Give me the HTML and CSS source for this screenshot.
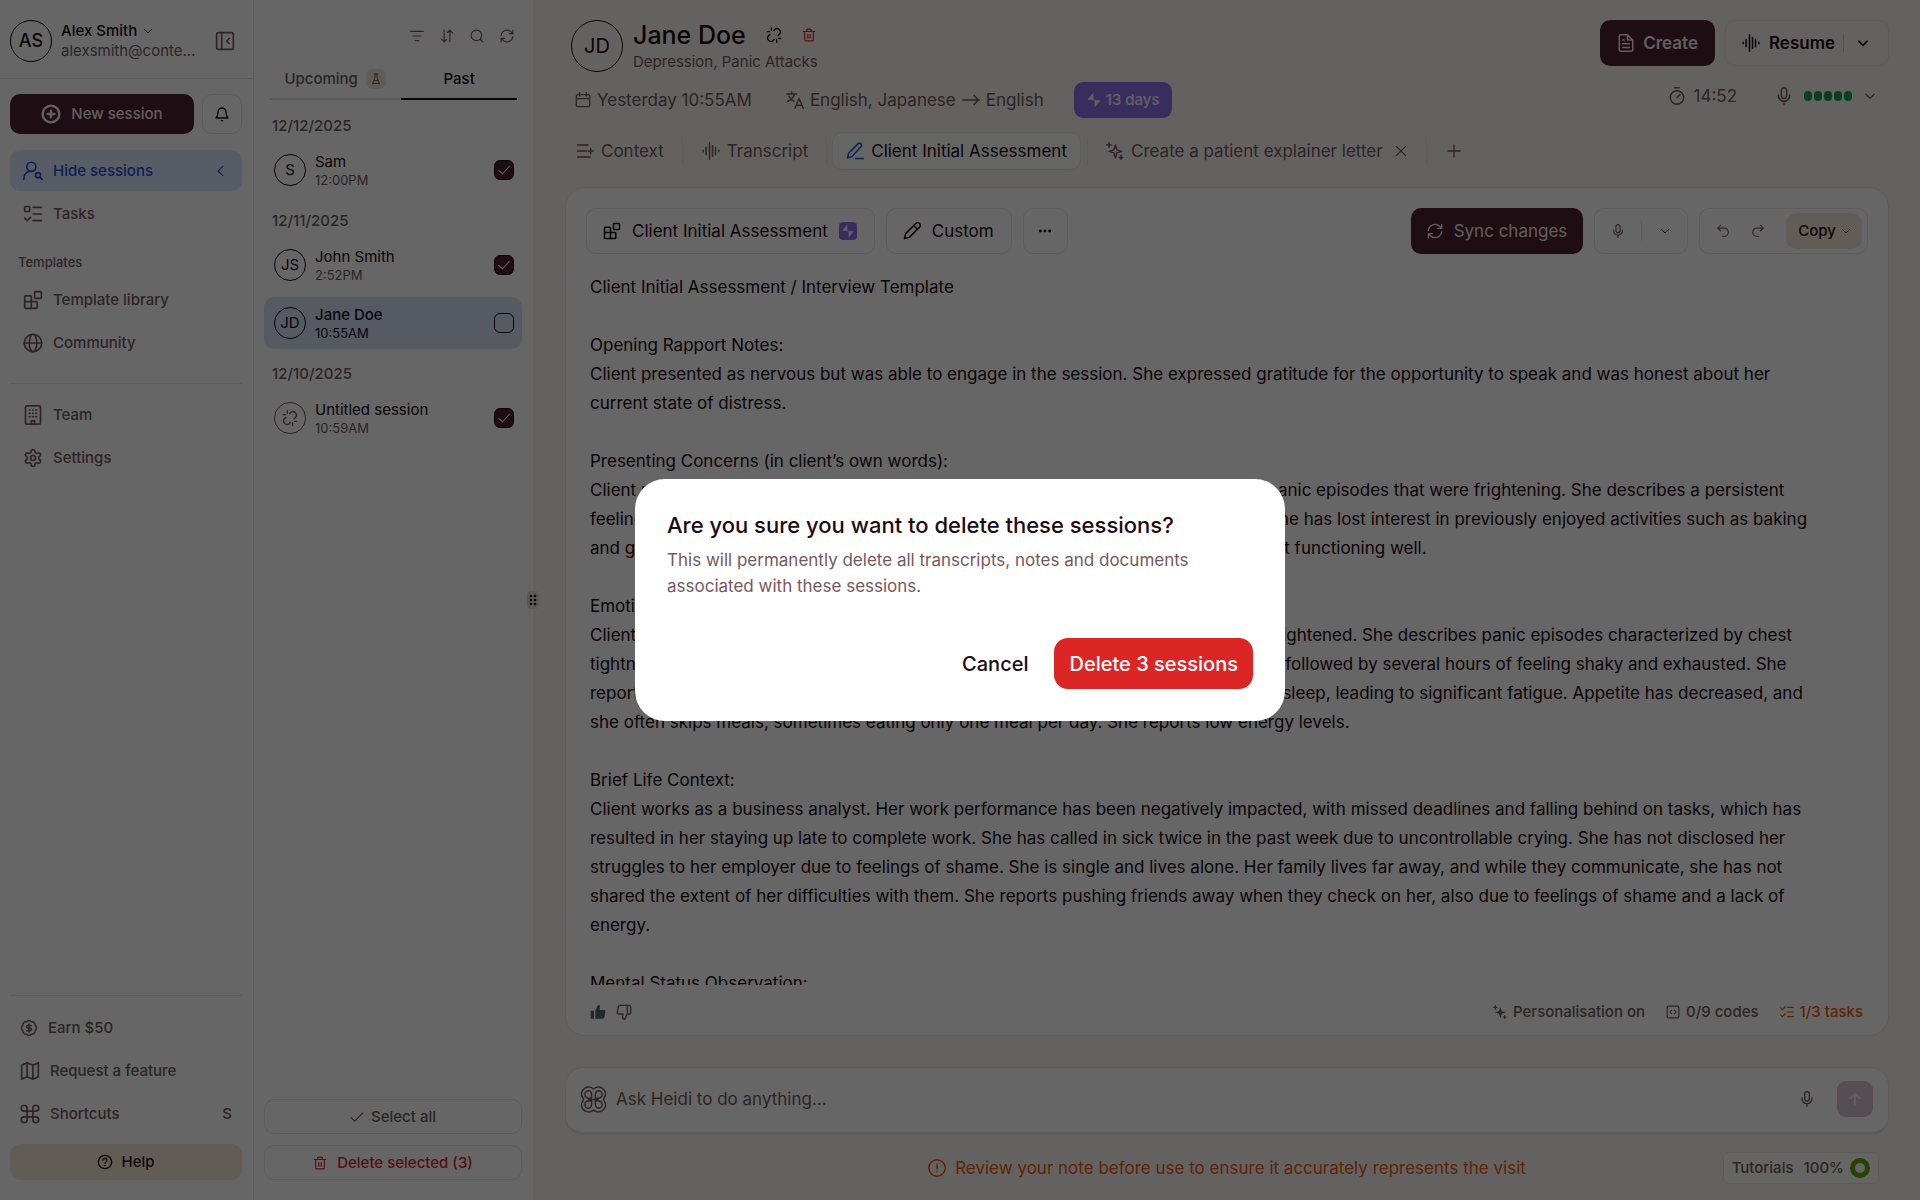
FILE: index.html
```html
<!DOCTYPE html>
<html lang="en">
<head>
  <meta charset="UTF-8">
  <title>Jane Doe – Client Initial Assessment</title>
  <meta name="viewport" content="width=device-width, initial-scale=1">
  <link rel="stylesheet" href="styles.css">
</head>
<body>
  <!-- icon sprite -->
  <svg class="sprite" aria-hidden="true">
    <symbol id="i-chevron" viewBox="0 0 24 24"><path d="M5 9l7 7 7-7"/></symbol>
    <symbol id="i-chevron-left" viewBox="0 0 24 24"><path d="M15 4l-8 8 8 8"/></symbol>
    <symbol id="i-panel" viewBox="0 0 24 24"><rect x="2" y="2" width="20" height="20" rx="2"/><path d="M8 2v20M17 9l-3 3 3 3"/></symbol>
    <symbol id="i-plus-circle" viewBox="0 0 24 24"><circle cx="12" cy="12" r="10"/><path d="M12 8v8M8 12h8"/></symbol>
    <symbol id="i-bell" viewBox="0 0 24 24"><path d="M6 9a6 6 0 0 1 12 0c0 5 1 7 3 9H3c2-2 3-4 3-9M11 22h2"/></symbol>
    <symbol id="i-user-search" viewBox="0 0 24 24"><circle cx="10" cy="7" r="5.5"/><path d="M1 22c0-5 2-8 6-9.5"/><circle cx="18" cy="17" r="3"/><path d="M20.5 19.5L23 22"/></symbol>
    <symbol id="i-tasks" viewBox="0 0 24 24"><rect x="2" y="3" width="6" height="6" rx="1"/><path d="M2 17l3 3 4-4M12 4h10M12 12h10M12 20h10"/></symbol>
    <symbol id="i-blocks" viewBox="0 0 24 24"><rect x="14" y="2" width="8" height="8" rx="1"/><path d="M10 22V8a1 1 0 0 0-1-1H3a1 1 0 0 0-1 1v13a1 1 0 0 0 1 1h13a1 1 0 0 0 1-1v-6a1 1 0 0 0-1-1H2"/></symbol>
    <symbol id="i-globe" viewBox="0 0 24 24"><circle cx="12" cy="12" r="10.5"/><ellipse cx="12" cy="12" rx="4.5" ry="10.5"/><path d="M1.5 12h21"/></symbol>
    <symbol id="i-building" viewBox="0 0 24 24"><rect x="3" y="1" width="18" height="22" rx="2"/><path d="M10 23v-4h4v4M7.5 6h1M11.5 6h1M15.5 6h1M7.5 10h1M11.5 10h1M15.5 10h1M7.5 14h1M11.5 14h1M15.5 14h1"/></symbol>
    <symbol id="i-gear" viewBox="0 0 24 24"><path d="M12.22 2h-.44a2 2 0 0 0-2 2v.18a2 2 0 0 1-1 1.73l-.43.25a2 2 0 0 1-2 0l-.15-.08a2 2 0 0 0-2.73.73l-.22.38a2 2 0 0 0 .73 2.73l.15.1a2 2 0 0 1 1 1.72v.51a2 2 0 0 1-1 1.74l-.15.09a2 2 0 0 0-.73 2.73l.22.38a2 2 0 0 0 2.73.73l.15-.08a2 2 0 0 1 2 0l.43.25a2 2 0 0 1 1 1.73V20a2 2 0 0 0 2 2h.44a2 2 0 0 0 2-2v-.18a2 2 0 0 1 1-1.73l.43-.25a2 2 0 0 1 2 0l.15.08a2 2 0 0 0 2.73-.73l.22-.39a2 2 0 0 0-.73-2.73l-.15-.08a2 2 0 0 1-1-1.74v-.5a2 2 0 0 1 1-1.74l.15-.09a2 2 0 0 0 .73-2.73l-.22-.38a2 2 0 0 0-2.73-.73l-.15.08a2 2 0 0 1-2 0l-.43-.25a2 2 0 0 1-1-1.73V4a2 2 0 0 0-2-2z"/><circle cx="12" cy="12" r="3"/></symbol>
    <symbol id="i-badge-dollar" viewBox="0 0 24 24"><path d="M3.85 8.62a4 4 0 0 1 4.78-4.77 4 4 0 0 1 6.74 0 4 4 0 0 1 4.78 4.78 4 4 0 0 1 0 6.74 4 4 0 0 1-4.77 4.78 4 4 0 0 1-6.75 0 4 4 0 0 1-4.78-4.77 4 4 0 0 1 0-6.76Z"/><path d="M15 8.5h-4.5a1.7 1.7 0 0 0 0 3.5h3a1.7 1.7 0 0 1 0 3.5H9M12 17.5v-11"/></symbol>
    <symbol id="i-map" viewBox="0 0 24 24"><path d="M8.5 2L2 5v17l6.5-3 7 3 6.5-3V2l-6.5 3zM8.5 2v17M15.5 5v17"/></symbol>
    <symbol id="i-command" viewBox="0 0 24 24"><path d="M15.5 5v14a3.5 3.5 0 1 0 3.5-3.5H5A3.5 3.5 0 1 0 8.500 19V5A3.5 3.5 0 1 0 5 8.500h14A3.5 3.5 0 1 0 15.500 5"/></symbol>
    <symbol id="i-help" viewBox="0 0 24 24"><circle cx="12" cy="12" r="10"/><path d="M9 9.500a3 3 0 1 1 4.500 2.500c-1 .6-1.500 1-1.500 2M12 17v.5"/></symbol>
    <symbol id="i-filter" viewBox="0 0 24 24"><path d="M1 4h22M5 12h14M9 20h6"/></symbol>
    <symbol id="i-sort" viewBox="0 0 24 24"><path d="M2 17l5 5 4-4M7 22V2M13 6l4-4 5 5M17 2v20"/></symbol>
    <symbol id="i-search" viewBox="0 0 24 24"><circle cx="11" cy="11" r="9"/><path d="M18 18l4 4"/></symbol>
    <symbol id="i-refresh" viewBox="0 0 24 24"><path d="M2 11a10 10 0 0 1 17-6l3 3M22 2v6h-6M22 13a10 10 0 0 1-17 6l-3-3M2 22v-6h6"/></symbol>
    <symbol id="i-flask" viewBox="0 0 24 24"><path d="M8 2h8M10 2v7L5 21h14L14 9V2M8 15h8"/></symbol>
    <symbol id="i-unlink" viewBox="0 0 24 24"><path d="M18 13l2.500-2.500a5 5 0 0 0-7-7L11.800 5.200M6 11l-2.500 2.500a5 5 0 0 0 7 7l1.700-1.700M8 1v4M2 7h3M16 19v4M19 17h3"/></symbol>
    <symbol id="i-check" viewBox="0 0 24 24"><path d="M2 13l6 6L22 5"/></symbol>
    <symbol id="i-trash" viewBox="0 0 24 24"><path d="M2 6h20M19.500 6v14a2 2 0 0 1-2 2h-11a2 2 0 0 1-2-2V6M8 6V4a2 2 0 0 1 2-2h4a2 2 0 0 1 2 2v2M10 11v6M14 11v6"/></symbol>
    <symbol id="i-calendar" viewBox="0 0 24 24"><rect x="2" y="4" width="20" height="18" rx="2"/><path d="M2 10h20M7 1v5M17 1v5"/></symbol>
    <symbol id="i-translate" viewBox="0 0 24 24"><path d="M1 4h13M7.500 1v3M11.500 4c-1.500 5-5 8-9.500 10M4 7c1.500 3 3.500 5 6.500 6.500M12 23l5.500-13L23 23M14 19h7"/></symbol>
    <symbol id="i-arrow-right" viewBox="0 0 24 24"><path d="M1 12h22M16 6l6 6-6 6"/></symbol>
    <symbol id="i-bolt" viewBox="0 0 24 24"><path class="solid" d="M11 1v10.500H2zM13 12.500h9L13 23zM9 11.500h6v1H9z"/></symbol>
    <symbol id="i-context" viewBox="0 0 24 24"><path d="M2 4h14M2 12h12M2 20h17M19.500 8.500v7M16.500 12h6.500"/></symbol>
    <symbol id="i-wave" viewBox="0 0 24 24"><path d="M1.500 11v2M5.500 7v10M10 1v22M14 5v14M18 7v10M22.500 11v2"/></symbol>
    <symbol id="i-pen-line" viewBox="0 0 24 24"><path d="M2 21l1.500-6L16 2.500a2.500 2.500 0 0 1 4 3.500L8 19.500zM13 22h10"/></symbol>
    <symbol id="i-pen" viewBox="0 0 24 24"><path d="M2 22l1.500-6.500L17 2a3.300 3.300 0 0 1 5 5L8.500 20.500zM14.500 5l4.500 4.500"/></symbol>
    <symbol id="i-sparkles" viewBox="0 0 24 24"><path d="M12.500 4l2 6.500 6.500 2-6.500 2-2 6.500-2-6.500-6.500-2 6.500-2zM4 1v6M1 4h6M20 18v5M17.500 20.500h5"/></symbol>
    <symbol id="i-sparkles-solid" viewBox="0 0 24 24"><path class="solid" d="M12.500 3l2.500 7.500 7.500 2-7.500 2.500-2.500 7.500-2.500-7.500L2.500 12.500 10 10.500z"/><path d="M4 1v6M1 4h6M20 18v5M17.500 20.500h5"/></symbol>
    <symbol id="i-close" viewBox="0 0 24 24"><path d="M4 4l16 16M20 4L4 20"/></symbol>
    <symbol id="i-plus" viewBox="0 0 24 24"><path d="M12 3v18M3 12h18"/></symbol>
    <symbol id="i-file" viewBox="0 0 24 24"><path d="M14 1H5a2 2 0 0 0-2 2v18a2 2 0 0 0 2 2h14a2 2 0 0 0 2-2V8zM14 1v7h7M7.500 8h2M7.500 13h9M7.500 18h9"/></symbol>
    <symbol id="i-timer" viewBox="0 0 24 24"><circle cx="12" cy="14" r="9"/><path d="M9 1h6M12 14l4-4"/></symbol>
    <symbol id="i-mic" viewBox="0 0 24 24"><rect x="8.500" y="1" width="7" height="14" rx="3.500"/><path d="M4.500 10.500v1a7.500 7.500 0 0 0 15 0v-1M12 19v4"/></symbol>
    <symbol id="i-dots" viewBox="0 0 24 24"><circle class="solid" cx="4" cy="12" r="2.500"/><circle class="solid" cx="12" cy="12" r="2.500"/><circle class="solid" cx="20" cy="12" r="2.500"/></symbol>
    <symbol id="i-undo" viewBox="0 0 24 24"><path d="M8 2L3 7l5 5M3 7h11a7 7 0 0 1 0 14h-3"/></symbol>
    <symbol id="i-redo" viewBox="0 0 24 24"><path d="M16 2l5 5-5 5M21 7H10a7 7 0 0 0 0 14h3"/></symbol>
    <symbol id="i-thumb-up" viewBox="0 0 24 24"><path class="solid" d="M1 10h5v12H1zM8 10l4-9c2 0 3.500 1.500 3 4l-.7 4H21c1.500 0 2.300 1 2 2.500L21.500 20c-.3 1.300-1.200 2-2.500 2H8z"/></symbol>
    <symbol id="i-thumb-down" viewBox="0 0 24 24"><path d="M17 2v13l-4 8c-2 0-3.500-1.500-3-4l.7-4H4c-1.500 0-2.300-1-2-2.500L3.500 4c.3-1.300 1.200-2 2.500-2h14a2 2 0 0 1 2 2v9a2 2 0 0 1-2 2h-3"/></symbol>
    <symbol id="i-code" viewBox="0 0 24 24"><rect x="2" y="2" width="20" height="20" rx="2"/><path d="M9.500 9l-2.500 3 2.500 3M14.500 9l2.500 3-2.500 3"/></symbol>
    <symbol id="i-checklist" viewBox="0 0 24 24"><path d="M1 5l3 3 5-5M1 17l3 3 5-5M13 4h10M13 12h10M13 20h10"/></symbol>
    <symbol id="i-logo" viewBox="0 0 28 28"><path d="M14 3C12 .8 8 .5 5 2.200 1 4.800.6 9.500 3 12.500c.6.8.6 2.200 0 3-2.400 3-2 7.700 2 10.300 3 1.700 7 1.400 9-.8 2 2.200 6 2.500 9 .8 4-2.600 4.400-7.300 2-10.300-.6-.8-.6-2.200 0-3 2.400-3 2-7.700-2-10.300-3-1.700-7-1.400-9 .8z"/><path d="M12 12.700C7.500 13.200 5 11.500 5 8.800 5 6.500 7 5 8.800 5c2.700 0 3.700 2.500 3.200 7.700zM16 12.700c4.500.5 7-1.200 7-3.900C23 6.500 21 5 19.200 5c-2.700 0-3.700 2.500-3.200 7.700zM12 15.300c-4.500-.5-7 1.200-7 3.900C5 21.500 7 23 8.800 23c2.700 0 3.700-2.500 3.200-7.700zM16 15.300c4.500-.5 7 1.200 7 3.900 0 2.300-2 3.800-3.800 3.800-2.700 0-3.700-2.500-3.200-7.700zM9 14h10"/></symbol>
    <symbol id="i-arrow-up" viewBox="0 0 24 24"><path d="M12 21V3M4 11l8-8 8 8"/></symbol>
    <symbol id="i-alert" viewBox="0 0 24 24"><circle cx="12" cy="12" r="11"/><path d="M12 7v6M12 16.500v.5"/></symbol>
    <symbol id="i-grip" viewBox="0 0 12 18"><circle class="solid" cx="4" cy="5" r="1.300"/><circle class="solid" cx="8" cy="5" r="1.300"/><circle class="solid" cx="4" cy="9" r="1.300"/><circle class="solid" cx="8" cy="9" r="1.300"/><circle class="solid" cx="4" cy="13" r="1.300"/><circle class="solid" cx="8" cy="13" r="1.300"/></symbol>
  </svg>

  <div class="app">
    <aside class="sidebar">
      <div class="account">
        <span class="avatar avatar-md">AS</span>
        <div class="account-text">
          <button class="account-name">Alex Smith <svg class="icon s12"><use href="#i-chevron"/></svg></button>
          <div class="account-mail">alexsmith@contentlab.com</div>
        </div>
        <button class="plain" aria-label="Collapse sidebar"><svg class="icon s20"><use href="#i-panel"/></svg></button>
      </div>

      <div class="new-row">
        <button class="btn-dark new-session"><svg class="icon s20 bold"><use href="#i-plus-circle"/></svg>New session</button>
        <button class="btn-outline bell" aria-label="Notifications"><svg class="icon s16"><use href="#i-bell"/></svg></button>
      </div>

      <nav class="nav">
        <a class="nav-item active" href="#"><svg class="icon s20"><use href="#i-user-search"/></svg>Hide sessions<svg class="icon s14 push"><use href="#i-chevron-left"/></svg></a>
        <a class="nav-item" href="#"><svg class="icon s20"><use href="#i-tasks"/></svg>Tasks</a>
        <h2 class="nav-title">Templates</h2>
        <a class="nav-item" href="#"><svg class="icon s20"><use href="#i-blocks"/></svg>Template library</a>
        <a class="nav-item" href="#"><svg class="icon s20"><use href="#i-globe"/></svg>Community</a>
        <hr>
        <a class="nav-item" href="#"><svg class="icon s20"><use href="#i-building"/></svg>Team</a>
        <a class="nav-item" href="#"><svg class="icon s20"><use href="#i-gear"/></svg>Settings</a>
      </nav>

      <div class="nav-bottom">
        <a class="nav-item" href="#"><svg class="icon s18"><use href="#i-badge-dollar"/></svg>Earn $50</a>
        <a class="nav-item" href="#"><svg class="icon s20"><use href="#i-map"/></svg>Request a feature</a>
        <a class="nav-item" href="#"><svg class="icon s20"><use href="#i-command"/></svg>Shortcuts<kbd class="push">S</kbd></a>
        <button class="btn-sand"><svg class="icon s16"><use href="#i-help"/></svg>Help</button>
      </div>
    </aside>

    <section class="sessions">
      <div class="sessions-tools">
        <button class="plain" aria-label="Filter"><svg class="icon s14"><use href="#i-filter"/></svg></button>
        <button class="plain" aria-label="Sort"><svg class="icon s14"><use href="#i-sort"/></svg></button>
        <button class="plain" aria-label="Search"><svg class="icon s14"><use href="#i-search"/></svg></button>
        <button class="plain" aria-label="Refresh"><svg class="icon s14"><use href="#i-refresh"/></svg></button>
      </div>
      <div class="sessions-tabs">
        <button class="tab-upcoming">Upcoming <span class="beta"><svg class="icon s12"><use href="#i-flask"/></svg></span></button>
        <button class="tab-past">Past</button>
      </div>

      <h3 class="date">12/12/2025</h3>
      <label class="session">
        <span class="avatar avatar-sm">S</span>
        <span class="session-text"><span class="session-name">Sam</span><span class="session-time">12:00PM</span></span>
        <input type="checkbox" checked>
      </label>
      <h3 class="date">12/11/2025</h3>
      <label class="session">
        <span class="avatar avatar-sm">JS</span>
        <span class="session-text"><span class="session-name">John Smith</span><span class="session-time">2:52PM</span></span>
        <input type="checkbox" checked>
      </label>
      <label class="session current">
        <span class="avatar avatar-sm">JD</span>
        <span class="session-text"><span class="session-name">Jane Doe</span><span class="session-time">10:55AM</span></span>
        <input type="checkbox">
      </label>
      <h3 class="date">12/10/2025</h3>
      <label class="session">
        <span class="avatar avatar-sm muted"><svg class="icon s16"><use href="#i-unlink"/></svg></span>
        <span class="session-text"><span class="session-name">Untitled session</span><span class="session-time">10:59AM</span></span>
        <input type="checkbox" checked>
      </label>

      <div class="sessions-actions">
        <button class="btn-outline"><svg class="icon s14"><use href="#i-check"/></svg>Select all</button>
        <button class="btn-outline danger"><svg class="icon s14"><use href="#i-trash"/></svg>Delete selected (3)</button>
      </div>
      <span class="grip"><svg class="icon"><use href="#i-grip"/></svg></span>
    </section>

    <main class="main">
      <header class="header">
        <div class="patient">
          <div class="patient-id">
            <span class="avatar avatar-lg">JD</span>
            <div>
              <div class="patient-name">
                <h1>Jane Doe</h1>
                <button class="plain dark" aria-label="Unlink patient"><svg class="icon s16"><use href="#i-unlink"/></svg></button>
                <button class="plain danger" aria-label="Delete session"><svg class="icon s14"><use href="#i-trash"/></svg></button>
              </div>
              <div class="patient-note">Depression, Panic Attacks</div>
            </div>
          </div>
          <div class="meta">
            <span class="meta-item when"><svg class="icon s16"><use href="#i-calendar"/></svg>Yesterday 10:55AM</span>
            <span class="meta-item lang"><svg class="icon s18"><use href="#i-translate"/></svg>English, Japanese <svg class="icon s18"><use href="#i-arrow-right"/></svg> English</span>
            <span class="trial"><svg class="icon s16"><use href="#i-bolt"/></svg>13 days</span>
          </div>
        </div>
        <div class="controls">
          <div class="controls-row">
            <button class="btn-dark create"><svg class="icon s18"><use href="#i-file"/></svg>Create</button>
            <div class="btn-outline split">
              <button class="plain resume"><svg class="icon s18"><use href="#i-wave"/></svg>Resume</button>
              <button class="plain resume-more" aria-label="More resume options"><svg class="icon s14 bold"><use href="#i-chevron"/></svg></button>
            </div>
          </div>
          <div class="recording">
            <span class="meta-item"><svg class="icon s18"><use href="#i-timer"/></svg>14:52</span>
            <button class="plain mic-level" aria-label="Microphone"><svg class="icon s18"><use href="#i-mic"/></svg>
              <span class="level"><i></i><i></i><i></i><i></i><i></i></span>
              <svg class="icon s14"><use href="#i-chevron"/></svg></button>
          </div>
        </div>
      </header>

      <nav class="tabs">
        <button class="tab"><svg class="icon s18"><use href="#i-context"/></svg>Context</button>
        <button class="tab"><svg class="icon s18"><use href="#i-wave"/></svg>Transcript</button>
        <button class="tab selected"><svg class="icon s18"><use href="#i-pen-line"/></svg>Client Initial Assessment</button>
        <button class="tab letter"><svg class="icon s18"><use href="#i-sparkles"/></svg>Create a patient explainer letter<svg class="icon s14"><use href="#i-close"/></svg></button>
        <button class="tab add" aria-label="Add document"><svg class="icon s16"><use href="#i-plus"/></svg></button>
      </nav>

      <article class="card">
        <div class="toolbar">
          <button class="btn-outline tool"><svg class="icon s18"><use href="#i-blocks"/></svg>Client Initial Assessment<span class="pro"><svg class="icon s14"><use href="#i-bolt"/></svg></span></button>
          <button class="btn-outline tool"><svg class="icon s18"><use href="#i-pen"/></svg>Custom</button>
          <button class="btn-outline more" aria-label="More"><svg class="icon s14"><use href="#i-dots"/></svg></button>
          <button class="btn-dark sync"><svg class="icon s16"><use href="#i-refresh"/></svg>Sync changes</button>
          <div class="btn-outline dictate">
            <button class="plain" aria-label="Dictate"><svg class="icon s14"><use href="#i-mic"/></svg></button>
            <button class="plain dark" aria-label="Dictation options"><svg class="icon s12"><use href="#i-chevron"/></svg></button>
          </div>
          <div class="btn-outline history">
            <button class="plain" aria-label="Undo"><svg class="icon s14"><use href="#i-undo"/></svg></button>
            <button class="plain" aria-label="Redo"><svg class="icon s14"><use href="#i-redo"/></svg></button>
            <button class="btn-sand copy">Copy <svg class="icon s12"><use href="#i-chevron"/></svg></button>
          </div>
        </div>

        <div class="note">
          <p>Client Initial Assessment / Interview Template</p>
          <p>Opening Rapport Notes:<br>
          Client presented as nervous but was able to engage in the session. She expressed gratitude for the opportunity to speak and was honest about her current state of distress.</p>
          <p>Presenting Concerns (in client’s own words):<br>
          Client reports feeling overwhelmed by low mood and worry, and has had two recent panic episodes that were frightening. She describes a persistent feeling of sadness and hopelessness that has lasted for about the past four months. She has lost interest in previously enjoyed activities such as baking and gardening. She states she feels disconnected from friends and feels that she is not functioning well.</p>
          <p>Emotional and Physical Symptoms:<br>
          Client states that her mood is low most of the day and that she often feels tense and frightened. She describes panic episodes characterized by chest tightness, shortness of breath, and a racing heart, which last ten minutes and are then followed by several hours of feeling shaky and exhausted. She reports waking several times every night and lying awake for long hours, struggling to sleep, leading to significant fatigue. Appetite has decreased, and she often skips meals, sometimes eating only one meal per day. She reports low energy levels.</p>
          <p>Brief Life Context:<br>
          Client works as a business analyst. Her work performance has been negatively impacted, with missed deadlines and falling behind on tasks, which has resulted in her staying up late to complete work. She has called in sick twice in the past week due to uncontrollable crying. She has not disclosed her struggles to her employer due to feelings of shame. She is single and lives alone. Her family lives far away, and while they communicate, she has not shared the extent of her difficulties with them. She reports pushing friends away when they check on her, also due to feelings of shame and a lack of energy.</p>
          <p>Mental Status Observation:</p>
        </div>

        <div class="card-foot">
          <button class="plain liked" aria-label="Good note"><svg class="icon s16"><use href="#i-thumb-up"/></svg></button>
          <button class="plain" aria-label="Bad note"><svg class="icon s16"><use href="#i-thumb-down"/></svg></button>
          <div class="stats">
            <button class="plain"><svg class="icon s14"><use href="#i-sparkles-solid"/></svg>Personalisation on</button>
            <button class="plain"><svg class="icon s14"><use href="#i-code"/></svg>0/9 codes</button>
            <button class="plain todo"><svg class="icon s14"><use href="#i-checklist"/></svg>1/3 tasks</button>
          </div>
        </div>
      </article>

      <form class="ask">
        <svg class="icon logo"><use href="#i-logo"/></svg>
        <input type="text" placeholder="Ask Heidi to do anything..." aria-label="Ask Heidi to do anything">
        <button type="button" class="plain" aria-label="Speak"><svg class="icon s16"><use href="#i-mic"/></svg></button>
        <button type="button" class="send" aria-label="Send"><svg class="icon s14 bold"><use href="#i-arrow-up"/></svg></button>
      </form>

      <footer class="footer">
        <div class="warning"><svg class="icon s18"><use href="#i-alert"/></svg>Review your note before use to ensure it accurately represents the visit</div>
        <button class="tutorials">Tutorials <span>100%</span><i class="ring"></i></button>
      </footer>
    </main>
  </div>

  <div class="overlay">
    <div class="modal" role="alertdialog" aria-labelledby="modal-title" aria-describedby="modal-text">
      <h2 id="modal-title">Are you sure you want to delete these sessions?</h2>
      <p id="modal-text">This will permanently delete all transcripts, notes and documents associated with these sessions.</p>
      <div class="modal-actions">
        <button class="modal-cancel">Cancel</button>
        <button class="modal-delete">Delete 3 sessions</button>
      </div>
    </div>
  </div>
</body>
</html>
```
FILE: styles.css
```css
:root {
  --ink: #1c0a12;
  --plum: #4b2230;
  --muted: #755760;
  --line: #ece4dc;
  --bg: #faf6f0;
  --sand: #f3e9d7;
  --blue: #1d4fd7;
  --red: #dc2626;
  --orange: #ea580c;
}

* { box-sizing: border-box; }
body { margin: 0; font-family: Inter, "Liberation Sans", sans-serif; font-size: 15px; line-height: 20px; color: var(--ink); }
button, input { font: inherit; color: inherit; }
button { padding: 0; border: 0; background: none; cursor: pointer; }
a { color: inherit; text-decoration: none; }
h1, h2, h3, p { margin: 0; }
.sprite { display: none; }

/* icons */
.icon { flex: none; fill: none; stroke: currentColor; stroke-width: 2; stroke-linecap: round; stroke-linejoin: round; }
.solid { fill: currentColor; stroke: none; }
.s12 { width: 12px; height: 12px; }
.s14 { width: 14px; height: 14px; }
.s16 { width: 16px; height: 16px; }
.s18 { width: 18px; height: 18px; }
.s20 { width: 20px; height: 20px; }
.bold { stroke-width: 3; }
.push { margin-left: auto; }

/* buttons */
.btn-dark, .btn-outline, .btn-sand, .plain { display: flex; align-items: center; justify-content: center; }
.btn-dark { background: var(--plum); color: #f4e8ea; border-radius: 10px; }
.btn-outline { background: #fff; border: 1px solid var(--line); border-radius: 10px; }
.btn-sand { background: var(--sand); border-radius: 10px; font-weight: 500; }
.plain { color: var(--muted); }
.dark { color: var(--ink); }
.danger { color: var(--red); }

.avatar { flex: none; display: flex; align-items: center; justify-content: center; border: 1px solid var(--ink); border-radius: 50%; }
.avatar-sm { width: 32px; height: 32px; }
.avatar-md { width: 42px; height: 42px; font-size: 18px; font-weight: 500; }
.avatar-lg { width: 52px; height: 52px; font-size: 20px; }
.avatar.muted { color: var(--muted); border-color: var(--muted); }

.app { display: flex; height: 100vh; background: #fff; }

/* sidebar */
.sidebar { width: 254px; flex: none; display: flex; flex-direction: column; border-right: 1px solid var(--line); }
.account { display: flex; align-items: center; gap: 9px; height: 79px; padding: 4px 18px 0 10px; border-bottom: 1px solid var(--line); }
.account-text { flex: 1; min-width: 0; padding-right: 8px; }
.account-name { display: flex; align-items: center; gap: 5px; font-weight: 500; }
.account-mail { color: var(--muted); overflow: hidden; text-overflow: ellipsis; }
.new-row { display: flex; gap: 8px; padding: 15px 11px 16px 10px; }
.new-session { flex: 1; height: 40px; gap: 10px; font-weight: 500; }
.bell { width: 40px; height: 40px; }
.nav { display: flex; flex-direction: column; gap: 2px; padding: 0 11px 0 10px; }
.nav-item { display: flex; align-items: center; gap: 10px; height: 41px; padding: 0 14px 0 13px; border-radius: 10px; font-weight: 500; color: var(--muted); }
.nav-item.active { background: #dbe7fd; color: var(--blue); }
.nav-title { padding: 16px 8px 5px; font-size: 13px; line-height: 20px; font-weight: 500; color: var(--muted); }
.nav hr { width: 100%; height: 1px; margin: 18px 0 8px; border: 0; background: var(--line); }
.nav-bottom { margin: auto 11px 20px 10px; padding-top: 10px; border-top: 1px solid var(--line); }
.nav-bottom .nav-item { height: 43px; padding: 0 10px; }
.nav-bottom kbd { font: inherit; }
.nav-bottom .btn-sand { width: 100%; height: 36px; margin-top: 9px; gap: 8px; }

/* sessions list */
.sessions { position: relative; width: 279px; flex: none; display: flex; flex-direction: column; padding: 28px 11px 20px 10px; }
.sessions-tools { display: flex; justify-content: flex-end; gap: 16px; height: 16px; padding-right: 8px; }
.sessions-tabs { display: flex; height: 56px; margin: 0 5px 1px; font-weight: 500; }
.sessions-tabs button { display: flex; align-items: center; justify-content: center; padding-top: 16px; border-bottom: 2px solid var(--line); color: var(--muted); }
.sessions-tabs .tab-upcoming { flex: 8; gap: 8px; }
.sessions-tabs .tab-past { flex: 7; border-color: var(--ink); color: var(--ink); }
.beta { display: flex; padding: 4px; border-radius: 6px; background: var(--sand); }
.date { height: 43px; padding: 15px 8px 0; font-size: 15px; line-height: 20px; font-weight: 500; color: var(--muted); }
.session { display: flex; align-items: center; gap: 9px; height: 52px; padding: 0 8px 0 10px; border-radius: 10px; }
.session + .session { margin-top: 6px; }
.session.current { background: #d5e1f8; }
.session-text { flex: 1; display: flex; flex-direction: column; }
.session-name { line-height: 19px; }
.session-time { font-size: 13px; line-height: 18px; color: var(--muted); }
.current .session-name { font-weight: 500; }
.current .session-time { color: var(--ink); }
.session input { appearance: none; position: relative; width: 20px; height: 20px; margin: 0; border: 1px solid var(--ink); border-radius: 6px; }
.session input:checked { background: var(--plum); }
.session input:checked::after { content: ""; position: absolute; left: 6px; top: 2px; width: 5px; height: 10px; border: solid #f4e8ea; border-width: 0 1px 1px 0; transform: rotate(42deg); }
.sessions-actions { display: grid; gap: 11px; margin-top: auto; }
.sessions-actions .btn-outline { height: 35px; gap: 7px; font-weight: 500; color: var(--muted); }
.sessions-actions .danger { gap: 10px; color: var(--red); }
.grip { position: absolute; right: -6px; top: 50%; width: 12px; height: 18px; margin-top: -9px; border-radius: 4px; background: #e4ddd5; }
.grip .icon { display: block; width: 12px; height: 18px; }

/* main column */
.main { flex: 1; min-width: 0; display: flex; flex-direction: column; padding: 20px 31px 16px 32px; background: var(--bg); }
.header { display: flex; justify-content: space-between; }
.patient { padding-left: 6px; }
.patient-id { display: flex; gap: 10px; height: 52px; }
.patient-name { display: flex; align-items: center; gap: 20px; height: 30px; }
h1 { font-size: 25px; line-height: 28px; font-weight: 500; }
.patient-note { line-height: 24px; color: var(--muted); }
.meta { display: flex; align-items: center; height: 36px; margin-top: 10px; font-size: 17px; color: var(--muted); }
.meta-item { display: flex; align-items: center; gap: 6px; }
.when { padding-left: 4px; }
.lang { margin: 0 30px 0 34px; }
.trial { display: flex; align-items: center; gap: 4px; height: 36px; padding: 0 12px; border-radius: 9px; background: #8b74e8; color: #f2effc; font-size: 15px; font-weight: 500; }
.controls-row { display: flex; gap: 10px; }
.create { height: 46px; gap: 8px; padding: 0 17px; font-size: 17px; font-weight: 600; }
.split { height: 46px; padding: 0 18px 0 16px; background: none; }
.resume { gap: 9px; padding-right: 8px; color: var(--ink); font-size: 17px; font-weight: 600; }
.resume-more { height: 18px; padding-left: 12px; border-left: 1px solid #d8cfc6; color: var(--ink); }
.recording { display: flex; justify-content: flex-end; gap: 38px; height: 20px; margin-top: 20px; padding-right: 12px; font-size: 17px; color: var(--muted); }
.recording .meta-item { gap: 8px; }
.mic-level { gap: 11px; }
.level { display: flex; gap: 2px; }
.level i { width: 8px; height: 10px; border-radius: 4px; background: #16a34a; }

.tabs { display: flex; align-items: center; margin-top: 14px; font-size: 17px; }
.tab { display: flex; align-items: center; gap: 7px; height: 38px; padding: 0 19px; color: var(--muted); position: relative; }
.tab:first-child { padding-left: 11px; }
.tab:not(.selected):not(.add)::after, .letter::before { content: ""; position: absolute; right: 0; top: 5px; height: 28px; border-right: 1px solid var(--line); }
.letter::before { right: auto; left: 0; }
.tab.selected { margin: 0 6px 0 5px; padding: 0 13px; border: 1px solid var(--line); border-radius: 10px; background: #fdfcfa; color: var(--ink); }
.tab.selected .icon { color: var(--blue); }
.letter .s14 { margin-left: 4px; }

.card { flex: 1; min-height: 0; display: flex; flex-direction: column; margin-top: 17px; padding: 20px 20px 0; border: 1px solid var(--line); border-radius: 20px; background: #fff; }
.toolbar { display: flex; gap: 11px; height: 46px; flex: none; }
.tool { gap: 11px; padding: 0 17px 0 16px; font-size: 17px; }
.pro { display: flex; padding: 2px; border-radius: 4px; background: #8b74e8; color: #f2effc; }
.more { width: 45px; }
.sync { margin-left: auto; padding: 0 16px; gap: 11px; font-size: 17px; }
.dictate { width: 94px; }
.dictate .plain { flex: 1; height: 20px; }
.dictate .plain + .plain { border-left: 1px solid var(--line); }
.history { gap: 21px; padding: 0 5px 0 16px; }
.copy { height: 36px; gap: 4px; padding: 0 10px 0 12px; }
.note { flex: 1; min-height: 0; overflow: hidden; margin-top: 19px; padding: 0 42px 0 4px; font-size: 17px; line-height: 29px; }
.note p { margin-bottom: 29px; }
.card-foot { display: flex; align-items: center; gap: 10px; height: 50px; flex: none; padding: 4px 5px 0 4px; }
.liked { color: #55607a; }
.stats { display: flex; gap: 21px; margin-left: auto; font-weight: 500; }
.stats .plain { gap: 6px; }
.stats .todo { color: var(--orange); }

.ask { display: flex; align-items: center; height: 68px; flex: none; margin-top: 31px; padding: 0 15px 2px 14px; border: 1px solid var(--line); border-bottom-width: 3px; border-radius: 18px; background: #fff; }
.logo { width: 27px; height: 27px; stroke-width: 1.5; color: var(--muted); }
.ask input { flex: 1; min-width: 0; border: 0; padding: 0 9px; background: none; outline: 0; font-size: 17px; }
.ask input::placeholder { color: var(--muted); opacity: 1; }
.send { display: flex; align-items: center; justify-content: center; width: 36px; height: 36px; margin-left: 22px; border-radius: 9px; background: #d8c4cc; color: #f8f0f2; }

.footer { position: relative; display: flex; justify-content: center; align-items: center; height: 32px; flex: none; margin-top: 17px; }
.warning { display: flex; align-items: center; gap: 9px; font-size: 17px; color: var(--orange); }
.tutorials { position: absolute; right: 10px; top: 0; display: flex; align-items: center; gap: 6px; height: 32px; padding: 0 8px; border: 1px solid var(--line); border-radius: 6px; background: #fdfcfa; color: var(--muted); font-weight: 500; }
.tutorials span { margin-left: 4px; }
.ring { width: 20px; height: 20px; border: 5px solid #65a30d; border-radius: 50%; }

/* confirm dialog */
.overlay { position: fixed; inset: 0; display: flex; align-items: center; justify-content: center; background: rgba(0, 0, 0, 0.6); }
.modal { width: 650px; padding: 32px; border-radius: 30px; background: #fff; }
.modal h2 { font-size: 22px; line-height: 28px; font-weight: 500; }
.modal p { margin-top: 8px; font-size: 17px; line-height: 26px; color: var(--muted); }
.modal-actions { display: flex; justify-content: flex-end; gap: 26px; margin-top: 39px; font-size: 20px; font-weight: 500; }
.modal-delete { height: 51px; padding: 0 15px; border-radius: 14px; background: var(--red); color: #fff; }
```
